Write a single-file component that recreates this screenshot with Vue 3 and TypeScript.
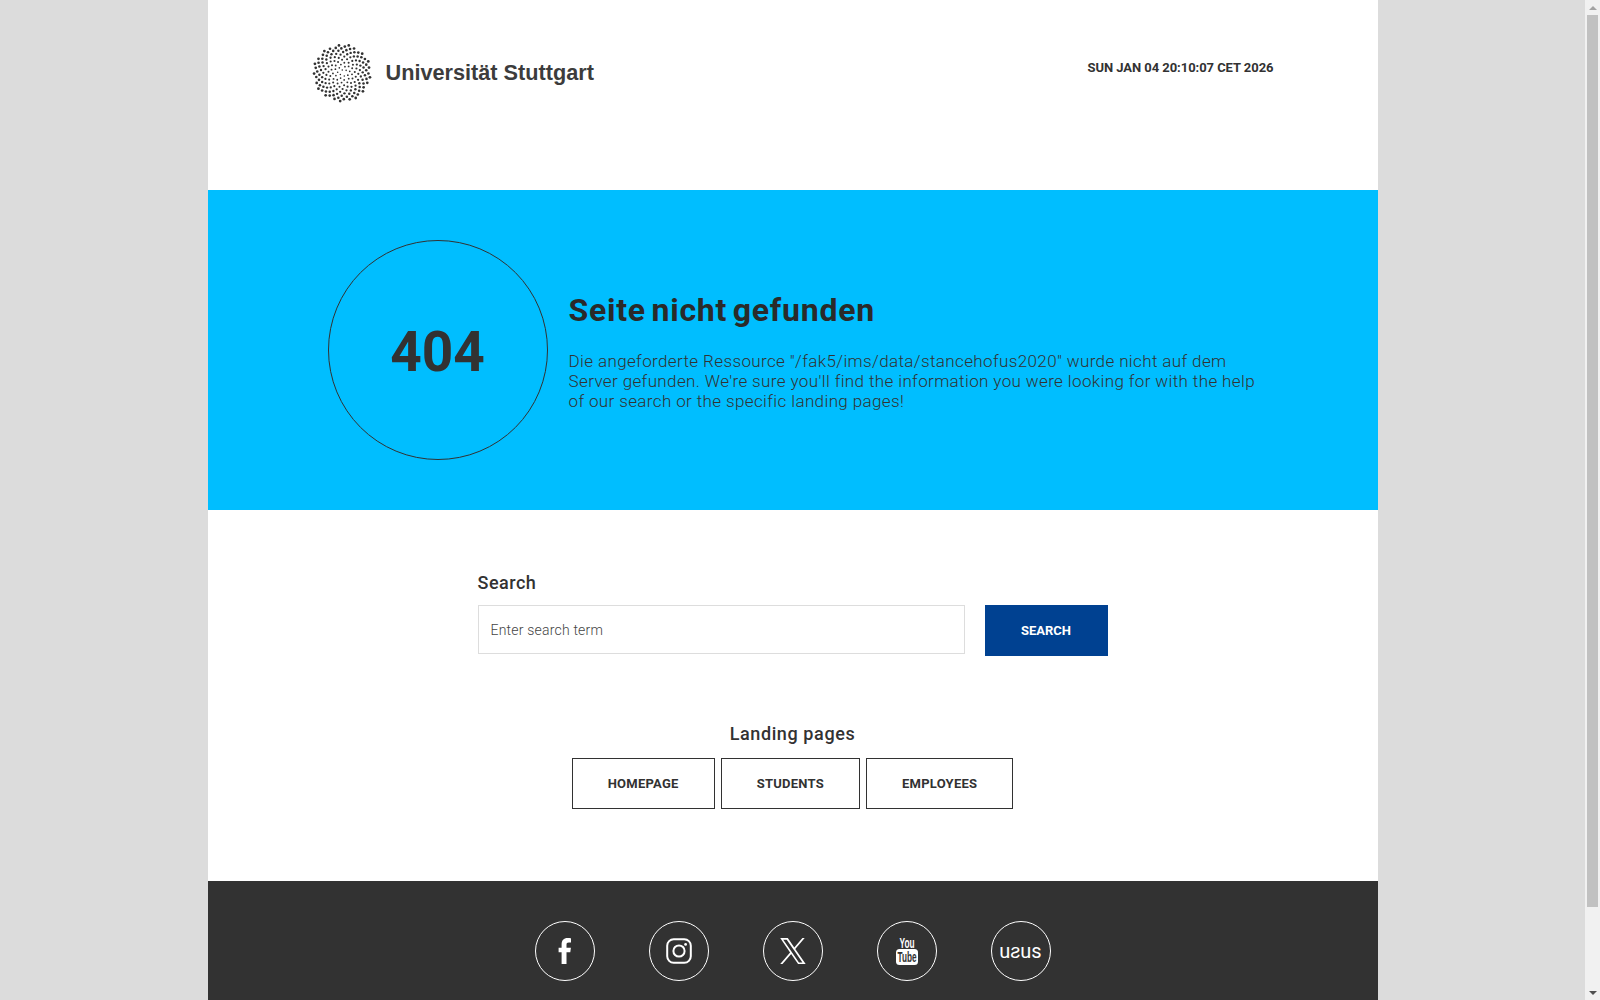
<script setup lang="ts">
const dots: { x: number; y: number; r: number }[] = []
for (let i = 1; i <= 170; i++) {
  const d = 2.2 * Math.sqrt(i)
  const a = i * 2.39996
  dots.push({ x: 30 + d * Math.cos(a), y: 30 + d * Math.sin(a), r: 0.7 + d * 0.024 })
}

const landing = ["Homepage", "Students", "Employees"]
</script>

<template>
  <div class="page">
    <div class="wrapper">
      <header class="top">
        <a class="logo" href="#">
          <svg width="60" height="60" viewBox="0 0 60 60">
            <circle v-for="(p, i) in dots" :key="i" :cx="p.x" :cy="p.y" :r="p.r" fill="#323232" />
          </svg>
          <span>Universität Stuttgart</span>
        </a>
        <div class="date">SUN JAN 04 20:10:07 CET 2026</div>
      </header>

      <section class="hero">
        <div class="circle">404</div>
        <div class="message">
          <h1>Seite nicht gefunden</h1>
          <p>
            Die angeforderte Ressource "/fak5/ims/data/stancehofus2020" wurde nicht auf dem
            Server gefunden. We're sure you'll find the information you were looking for with the help
            of our search or the specific landing pages!
          </p>
        </div>
      </section>

      <section class="search">
        <label for="q">Search</label>
        <div class="search-row">
          <input id="q" type="text" placeholder="Enter search term" />
          <button type="button">Search</button>
        </div>
      </section>

      <section class="landing">
        <h2>Landing pages</h2>
        <div class="landing-links">
          <a v-for="l in landing" :key="l" href="#">{{ l }}</a>
        </div>
      </section>

      <footer class="foot">
        <a class="social" href="#" aria-label="Facebook">
          <svg width="14" height="26" viewBox="0 0 14 26">
            <path fill="#fff" d="M3.600 26V14.200H.6V9.800h3V6.500C3.600 2.300 5.800 0 9.500 0c1.400 0 2.800.1 3.500.2v4.300h-2.200c-1.800 0-2.300.9-2.300 2.300v3h4.400l-.6 4.400H8.500V26z" />
          </svg>
        </a>
        <a class="social" href="#" aria-label="Instagram">
          <svg width="26" height="26" viewBox="0 0 26 26" fill="none" stroke="#fff">
            <rect x="1.200" y="1.200" width="23.600" height="23.600" rx="6.500" stroke-width="2" />
            <circle cx="13" cy="13" r="5.600" stroke-width="2" />
            <circle cx="19.600" cy="6.400" r="1.400" fill="#fff" stroke="none" />
          </svg>
        </a>
        <a class="social" href="#" aria-label="X">
          <svg width="26" height="26" viewBox="0 0 24 24">
            <path fill="#fff" d="M14.100 10.200 22.800 0h-2.100l-7.500 8.800L7.200 0H.2l9.100 13.300L.2 24h2.100l8-9.300 6.400 9.300h7zm-2.800 3.300-.9-1.300L3 1.600h3.200l5.900 8.500.9 1.300 7.700 11.100h-3.200z" />
          </svg>
        </a>
        <a class="social" href="#" aria-label="YouTube">
          <svg class="yt" width="22" height="27" viewBox="0 0 22 27">
            <text x="3.500" y="10" textLength="15" lengthAdjust="spacingAndGlyphs">You</text>
            <rect x="0" y="11" width="22" height="16" rx="3.500" fill="#fff" />
            <text class="tube" x="1.500" y="24" textLength="19" lengthAdjust="spacingAndGlyphs">Tube</text>
          </svg>
        </a>
        <a class="social usus" href="#">uƨus</a>
      </footer>
    </div>
    <aside class="scrollbar">
      <span class="arrow up"></span>
      <span class="track"><span class="thumb"></span></span>
      <span class="arrow down"></span>
    </aside>
  </div>
</template>

<style>
html,
body {
  margin: 0;
  background: #dcdcdc;
}
</style>

<style scoped>
.page {
  padding-right: 15px;
}

.wrapper {
  width: 1170px;
  margin: 0 auto;
  background: #fff;
  color: #323232;
  font-family: Roboto, "Liberation Sans", sans-serif;
}

.top {
  height: 190px;
  padding: 43px 104px 0 104px;
  box-sizing: border-box;
  display: flex;
  justify-content: space-between;
  align-items: flex-start;
}

.logo {
  display: flex;
  align-items: center;
  gap: 14px;
  color: #3c3c3c;
  text-decoration: none;
  font-family: "Liberation Sans", Arial, sans-serif;
  font-weight: 700;
  font-size: 21.7px;
}

.date {
  margin-top: 17px;
  font-size: 13px;
  font-weight: 700;
  letter-spacing: -0.05px;
}

.hero {
  height: 320px;
  padding: 50px 110px 50px 120px;
  box-sizing: border-box;
  background: #00beff;
  display: flex;
  align-items: center;
  gap: 21px;
}

.circle {
  flex: none;
  width: 220px;
  height: 220px;
  padding-top: 4px;
  box-sizing: border-box;
  border: 1px solid #323232;
  border-radius: 50%;
  display: flex;
  align-items: center;
  justify-content: center;
  font-size: 55px;
  font-weight: 700;
}

h1 {
  margin: 0 0 22px;
  font-size: 32px;
  font-weight: 700;
  letter-spacing: 0.75px;
  word-spacing: -3px;
  line-height: 38px;
  color: #2a2a2a;
}

.message {
  padding-top: 1px;
}

.message p {
  margin: 0;
  font-size: 17px;
  font-weight: 300;
  line-height: 20px;
  letter-spacing: 0.38px;
}

.search {
  padding: 61px 0 0 270px;
}

.search label {
  display: block;
  font-size: 18px;
  font-weight: 500;
  line-height: 24px;
  letter-spacing: 0.5px;
  margin-bottom: 10px;
}

.search-row {
  display: flex;
  align-items: flex-start;
  gap: 20px;
}

.search input {
  width: 487px;
  height: 49px;
  box-sizing: border-box;
  border: 1px solid #ddd;
  padding: 0 12px;
  font-family: inherit;
  font-size: 14px;
  font-weight: 300;
  letter-spacing: 0.2px;
  outline: none;
}

.search input::placeholder {
  color: #444;
}

.search button {
  width: 123px;
  height: 51px;
  border: 0;
  background: #004191;
  color: #fff;
  font-family: inherit;
  font-size: 13px;
  font-weight: 700;
  text-transform: uppercase;
}

.landing {
  padding-top: 66px;
  text-align: center;
}

h2 {
  margin: 0 0 12px;
  font-size: 18px;
  font-weight: 500;
  line-height: 24px;
  letter-spacing: 0.6px;
}

.landing-links {
  display: flex;
  justify-content: center;
  gap: 6px;
}

.landing-links a {
  height: 51px;
  padding: 0 35px;
  box-sizing: border-box;
  border: 1px solid #323232;
  display: flex;
  align-items: center;
  color: #323232;
  text-decoration: none;
  text-transform: uppercase;
  font-size: 13px;
  font-weight: 700;
  letter-spacing: 0.25px;
}

.foot {
  margin-top: 72px;
  height: 205px;
  padding-top: 40px;
  box-sizing: border-box;
  background: #323232;
  display: flex;
  justify-content: center;
  align-items: flex-start;
  gap: 54px;
}

.social {
  width: 60px;
  height: 60px;
  box-sizing: border-box;
  border: 1px solid #fff;
  border-radius: 50%;
  display: flex;
  align-items: center;
  justify-content: center;
  color: #fff;
  text-decoration: none;
}

.yt {
  overflow: visible;
}

.yt text {
  fill: #fff;
  font-family: "Liberation Sans", sans-serif;
  font-size: 14px;
  font-weight: 700;
}

.yt .tube {
  fill: #323232;
}

.usus {
  font-family: Roboto, sans-serif;
  font-weight: 400;
  font-size: 20px;
}

.scrollbar {
  position: fixed;
  top: 0;
  right: 0;
  bottom: 0;
  width: 15px;
  background: #f1f1f1;
  display: flex;
  flex-direction: column;
}

.arrow {
  flex: none;
  height: 15px;
  display: flex;
  align-items: center;
  justify-content: center;
}

.arrow::before {
  content: "";
  border-left: 4px solid transparent;
  border-right: 4px solid transparent;
}

.up::before {
  border-bottom: 4px solid #a3a3a3;
}

.down::before {
  border-top: 4px solid #505050;
}

.track {
  flex: 1;
  padding: 0 2px;
}

.thumb {
  display: block;
  height: 892px;
  background: #c1c1c1;
}
</style>
